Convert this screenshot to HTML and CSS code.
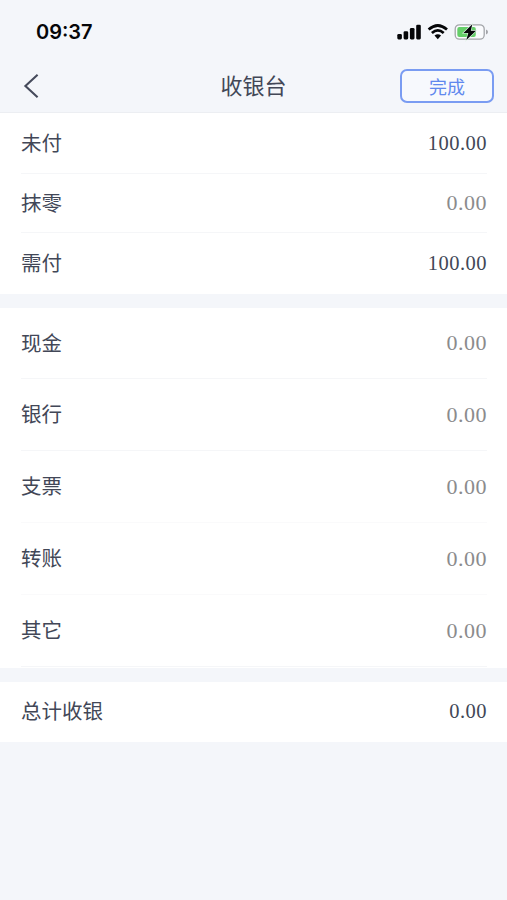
FILE: index.html
```html
<!DOCTYPE html>
<html lang="zh-CN">
<head>
<meta charset="utf-8">
<title>收银台</title>
<link rel="stylesheet" href="styles.css">
</head>
<body>
<div class="status">
  <span class="time">09:37</span>
  <svg class="indicators" width="92" height="20" viewBox="0 0 92 20">
    <g fill="#050608">
      <rect x="0.3" y="12" width="4.6" height="5.4" rx="1.3"/>
      <rect x="6.6" y="9.2" width="4.6" height="8.2" rx="1.3"/>
      <rect x="12.9" y="6" width="4.6" height="11.4" rx="1.3"/>
      <rect x="19.2" y="2.8" width="4.6" height="14.6" rx="1.3"/>
    </g>
    <g fill="none" stroke="#050608" stroke-width="2.7">
      <path d="M31.6 7.6Q40.8 -0.6 50 7.6"/>
      <path d="M34.9 11.1Q40.8 5.8 46.7 11.1"/>
    </g>
    <path d="M37.5 13.6Q40.8 11 44.1 13.6L40.8 17.2Z" fill="#050608"/>
    <rect x="58.2" y="2.8" width="29" height="14.4" rx="4.2" fill="#fafbfd" stroke="#a3a5a9" stroke-width="1.3"/>
    <rect x="60.3" y="4.9" width="18.5" height="10.2" rx="2" fill="#65ce69"/>
    <path d="M89 7.6Q91 8.2 91 10T89 12.4Z" fill="#a3a5a9"/>
    <path d="M75.3 2.2L66.4 11H71.3L69.3 18L79 8.7H73.8Z" fill="#050608" stroke="#e4f4e8" stroke-width="1.2" paint-order="stroke"/>
  </svg>
</div>
<header class="nav">
  <svg class="back" width="16" height="26" viewBox="0 0 16 26"><path d="M14.6 1.8L2.4 13L14.6 24.2" fill="none" stroke="#454a5b" stroke-width="2.1"/></svg>
  <h1 class="title">收银台</h1>
  <button class="done">完成</button>
</header>
<section class="group summary">
  <div class="row"><span class="label">未付</span><span class="amount">100.00</span></div>
  <div class="row"><span class="label">抹零</span><span class="amount muted">0.00</span></div>
  <div class="row"><span class="label">需付</span><span class="amount">100.00</span></div>
</section>
<section class="group methods">
  <div class="row"><span class="label">现金</span><span class="amount muted">0.00</span></div>
  <div class="row"><span class="label">银行</span><span class="amount muted">0.00</span></div>
  <div class="row"><span class="label">支票</span><span class="amount muted">0.00</span></div>
  <div class="row"><span class="label">转账</span><span class="amount muted">0.00</span></div>
  <div class="row"><span class="label">其它</span><span class="amount muted">0.00</span></div>
</section>
<section class="group total">
  <div class="row"><span class="label">总计收银</span><span class="amount">0.00</span></div>
</section>
</body>
</html>
```
FILE: styles.css
```css
* { box-sizing: border-box; }
body {
  margin: 0;
  min-height: 900px;
  background: #f4f6fa;
  color: #424757;
  font-family: "Noto Sans CJK SC", sans-serif;
}
.status {
  display: flex;
  justify-content: space-between;
  align-items: center;
  height: 60px;
  padding: 4px 18px 0 36px;
}
.time {
  color: #050608;
  font: 600 20px/24px Inter, sans-serif;
}
.nav {
  display: grid;
  grid-template-columns: 94px 1fr 94px;
  align-items: center;
  height: 53px;
  padding: 0 13px 0 23px;
  border-bottom: 1px solid #eceef2;
}
.title {
  margin: 0;
  padding: 0 10px 4px 0;
  text-align: center;
  font-size: 22px;
  font-weight: 400;
  line-height: 32px;
}
.done {
  height: 34px;
  padding: 0;
  border: 2px solid #7a9cf2;
  border-radius: 7px;
  background: #f7f9fd;
  color: #6088ee;
  font: 400 18px/26px "Noto Sans CJK SC", sans-serif;
}
.group {
  margin-bottom: 14px;
  padding: 0 20px 0 21px;
  background: #fff;
}
.row {
  display: flex;
  justify-content: space-between;
  align-items: center;
  height: 72px;
  border-bottom: 1px solid #f5f6f8;
  font-size: 20.5px;
  line-height: 30px;
}
.label { padding-bottom: 3px; }
.summary .row { height: 59px; }
.summary .row:first-child { height: 61px; }
.summary .row:last-child { height: 61px; padding-bottom: 1px; border-bottom: 0; }
.methods { height: 360px; }
.methods .row:first-child { height: 71px; }
.methods .row:nth-child(n+3) { border-color: #fafafb; }
.methods .row:last-child { border-color: #f5f6f8; }
.total { margin-bottom: 0; }
.total .row { height: 60px; padding-bottom: 2px; border-bottom: 0; }
.amount {
  font: 20.5px/30px "Liberation Serif", serif;
  letter-spacing: 0.5px;
}
.muted {
  color: #8b8b8d;
  font-size: 22px;
}
```
